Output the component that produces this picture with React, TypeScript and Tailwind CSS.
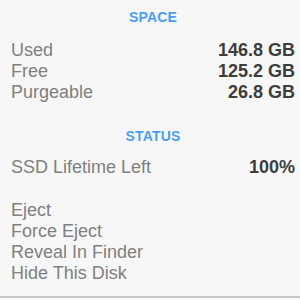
const space = [
  { label: "Used", value: "146.8 GB" },
  { label: "Free", value: "125.2 GB" },
  { label: "Purgeable", value: "26.8 GB" },
];

const actions = ["Eject", "Force Eject", "Reveal In Finder", "Hide This Disk"];

const SectionTitle = ({ title }: { title: string }) => (
  <div className="flex justify-center text-[14px] leading-[17px] font-bold tracking-[0.2px] text-[#4a9ff5]">
    {title}
  </div>
);

const Row = ({ label, value }: { label: string; value: string }) => (
  <div className="flex justify-between text-[18px] leading-[21px]">
    <span className="text-[#808080]">{label}</span>
    <span className="font-semibold text-[#3d3d3d]">{value}</span>
  </div>
);

const App = () => {
  return (
    <div
      className="w-[300px] h-[300px] overflow-hidden bg-[#f7f7f7] flex flex-col"
      style={{ fontFamily: '"Liberation Sans", Arial, sans-serif' }}
    >
      <div className="pt-[9px] pl-[11px] pr-[5px]">
        <SectionTitle title="SPACE" />
        <div className="mt-[14px] flex flex-col">
          {space.map((s) => (
            <Row key={s.label} label={s.label} value={s.value} />
          ))}
        </div>
      </div>

      <div className="mt-[12px] h-px bg-[#dcdcdc]" />

      <div className="pt-[13px] pl-[11px] pr-[5px]">
        <SectionTitle title="STATUS" />
        <div className="mt-[12px]">
          <Row label="SSD Lifetime Left" value="100%" />
        </div>
      </div>

      <div className="mt-[10px] h-px bg-[#dcdcdc]" />

      <div className="pt-[12px] pl-[11px] flex flex-col text-[18px] leading-[21px] text-[#808080]">
        {actions.map((a) => (
          <div key={a}>{a}</div>
        ))}
      </div>

      <div className="mt-[12px] h-[2px] shrink-0 bg-[#c8c8c8]" />
      <div className="pl-[84px] flex justify-center text-[14px] leading-[17px] font-bold text-[#4a9ff5] -mt-[1px]">
        BATTERY
      </div>
    </div>
  );
};

export default App;
